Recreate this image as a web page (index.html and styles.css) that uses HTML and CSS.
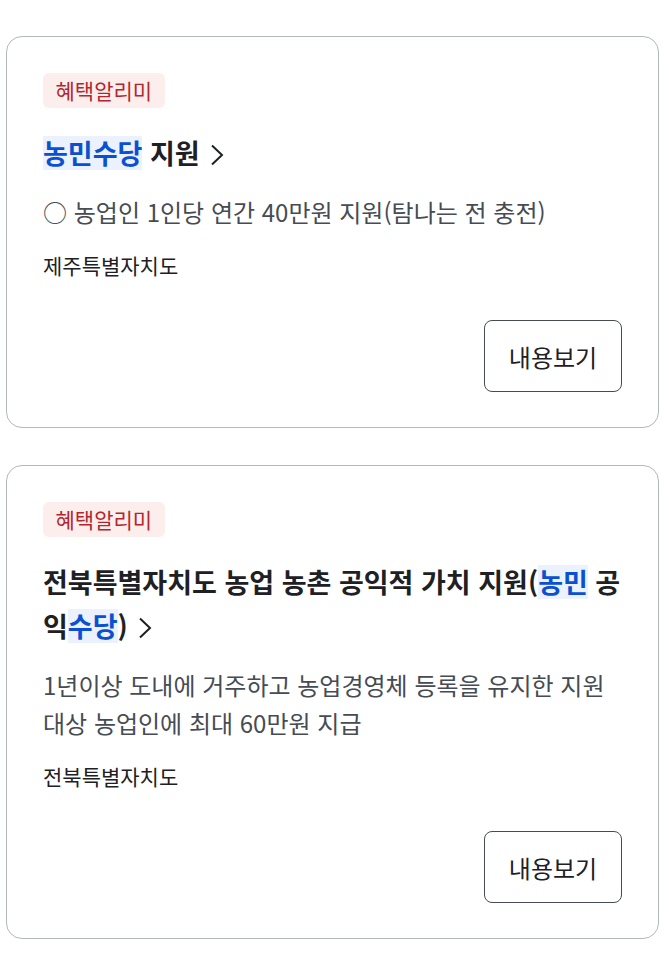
FILE: index.html
```html
<!DOCTYPE html>
<html lang="ko">
<head>
<meta charset="utf-8">
<link rel="stylesheet" href="styles.css">
</head>
<body>
<div class="list">
  <div class="card">
    <span class="tag">혜택알리미</span>
    <h3 class="title"><span class="hl">농민수당</span> 지원<svg class="chev" viewBox="0 0 14 22" width="14" height="22"><path d="M2 1.5 L12 11 L2 20.5" fill="none" stroke="#1e2124" stroke-width="2"/></svg></h3>
    <p class="desc">○ 농업인 1인당 연간 40만원 지원(탐나는 전 충전)</p>
    <p class="region">제주특별자치도</p>
    <div class="actions"><button class="btn">내용보기</button></div>
  </div>
  <div class="card">
    <span class="tag">혜택알리미</span>
    <h3 class="title">전북특별자치도 농업 농촌 공익적 가치 지원(<span class="hl">농민</span> 공익<span class="hl">수당</span>)<svg class="chev" viewBox="0 0 14 22" width="14" height="22"><path d="M2 1.5 L12 11 L2 20.5" fill="none" stroke="#1e2124" stroke-width="2"/></svg></h3>
    <p class="desc">1년이상 도내에 거주하고 농업경영체 등록을 유지한 지원 대상 농업인에 최대 60만원 지급</p>
    <p class="region">전북특별자치도</p>
    <div class="actions"><button class="btn">내용보기</button></div>
  </div>
</div>
</body>
</html>
```
FILE: styles.css
```css
* { box-sizing: border-box; }
html, body { margin: 0; padding: 0; background: #fff; }
body {
  font-family: "Noto Sans CJK KR", "Noto Sans", sans-serif;
  color: #1e2124;
}
.list {
  display: flex;
  flex-direction: column;
  gap: 37px;
  padding: 36px 10px 16px 6px;
}
.card {
  border: 1px solid #b1b8be;
  border-radius: 16px;
  padding: 36px 36px 35px 36px;
  display: flex;
  flex-direction: column;
  align-items: flex-start;
}
.tag {
  display: inline-block;
  background: #fdeeee;
  color: #b3262d;
  font-size: 21px;
  line-height: 35px;
  height: 35px;
  padding: 0 12.5px;
  border-radius: 6px;
}
.title {
  margin: 23px 0 0;
  font-size: 27px;
  font-weight: 700;
  line-height: 44px;
  color: #1e2124;
}
.hl {
  display: inline-block;
  line-height: 34px;
  color: #0b50d0;
  background: #ebf2fe;
}
.chev {
  display: inline-block;
  vertical-align: -2px;
  margin-left: 10px;
}
.desc {
  margin: 18px 0 0;
  font-size: 24px;
  line-height: 38px;
  color: #464c53;
}
.region {
  margin: 19px 0 0;
  font-size: 21px;
  line-height: 30px;
  color: #1e2124;
}
.actions {
  align-self: stretch;
  display: flex;
  justify-content: flex-end;
  margin-top: 40px;
}
.btn {
  width: 138px;
  height: 72px;
  border: 1px solid #464c53;
  border-radius: 8px;
  background: #fff;
  font-family: inherit;
  font-size: 24px;
  color: #1e2124;
  padding: 0;
}
```
